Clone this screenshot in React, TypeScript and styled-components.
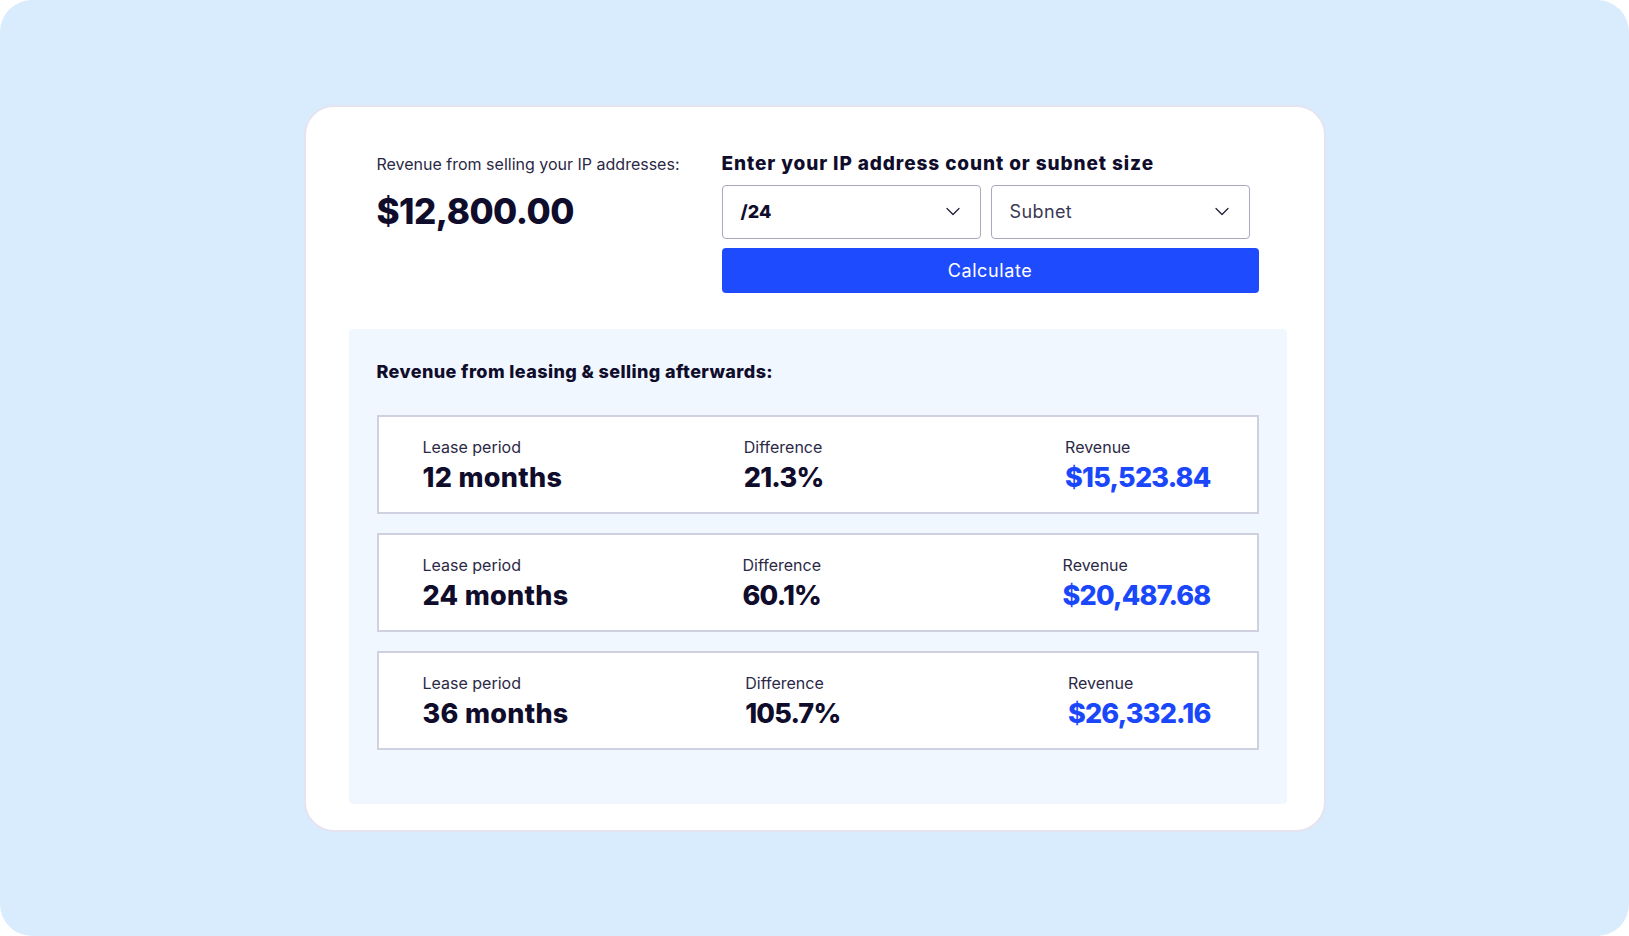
import * as React from 'react';
import styled, { createGlobalStyle } from 'styled-components';

const GlobalStyle = createGlobalStyle`
  html, body {
    margin: 0;
    padding: 0;
    background: #ffffff;
  }
  * {
    box-sizing: border-box;
  }
`;

const Frame = styled.div`
  width: 1629px;
  height: 936px;
  background: #d8ecfe;
  border-radius: 32px;
  display: flex;
  align-items: center;
  justify-content: center;
  font-family: Inter, 'Noto Sans', sans-serif;
  color: #100d2c;
`;

const Card = styled.div`
  width: 1022px;
  background: #ffffff;
  border: 2px solid #e5e3f0;
  border-radius: 30px;
  padding: 45px 37px 26px 43px;
`;

const Top = styled.div`
  display: grid;
  grid-template-columns: 345px 1fr;
  padding: 0 28px;
`;

const Summary = styled.div`
  display: flex;
  flex-direction: column;
  gap: 14px;
`;

const SummaryLabel = styled.div`
  font-size: 16px;
  line-height: 24px;
  color: #2b2946;
`;

const SummaryAmount = styled.div`
  font-size: 35px;
  line-height: 42px;
  font-weight: 800;
  letter-spacing: -0.5px;
`;

const Form = styled.div`
  display: flex;
  flex-direction: column;
`;

const FormTitle = styled.div`
  font-size: 19px;
  line-height: 24px;
  font-weight: 800;
  letter-spacing: 0.9px;
  margin-bottom: 9px;
`;

const Selects = styled.div`
  display: flex;
  gap: 10px;
  margin-bottom: 9px;
`;

const SelectBox = styled.div<{ $strong?: boolean }>`
  width: 259px;
  height: 54px;
  border: 1.5px solid #a9a8c0;
  border-radius: 4px;
  display: flex;
  align-items: center;
  justify-content: space-between;
  padding: 0 20px 0 18px;
  font-size: 18px;
  letter-spacing: ${(p) => (p.$strong ? '0' : '0.4px')};
  font-weight: ${(p) => (p.$strong ? 800 : 400)};
  color: ${(p) => (p.$strong ? '#100d2c' : '#3a3852')};
`;

const CalcButton = styled.button`
  height: 45px;
  width: 100%;
  border: none;
  border-radius: 4px;
  background: #1f4bff;
  color: #ffffff;
  font-family: inherit;
  font-size: 18px;
  letter-spacing: 0.6px;
  cursor: pointer;
`;

const Panel = styled.div`
  margin-top: 36px;
  background: #f0f7fe;
  border-radius: 4px;
  padding: 30px 28px 54px;
`;

const PanelTitle = styled.div`
  font-size: 18px;
  line-height: 26px;
  font-weight: 800;
  letter-spacing: 0.4px;
  margin-bottom: 30px;
`;

const Rows = styled.div`
  display: flex;
  flex-direction: column;
  gap: 19px;
`;

const Row = styled.div`
  display: grid;
  grid-template-columns: 1fr 1fr auto;
  background: #ffffff;
  border: 2px solid #d0d1e0;
  padding: 18px 46px 18px 44px;
`;

const Cell = styled.div`
  display: flex;
  flex-direction: column;
  gap: 3px;
`;

const CellLabel = styled.div`
  font-size: 16px;
  line-height: 24px;
  color: #2b2946;
`;

const CellValue = styled.div<{ $accent?: boolean; $numeric?: boolean }>`
  font-size: 27px;
  line-height: 32px;
  font-weight: 800;
  letter-spacing: ${(p) => (p.$numeric ? '-0.8px' : '0.3px')};
  color: ${(p) => (p.$accent ? '#1b47fb' : '#100d2c')};
`;

const Chevron = () => (
  <svg width="14" height="9" viewBox="0 0 14 9" fill="none">
    <path d="M1 1.5l6 6 6-6" stroke="#1c1a33" strokeWidth="1.2" strokeLinecap="round" strokeLinejoin="round" />
  </svg>
);

const leases = [
  { period: '12 months', diff: '21.3%', revenue: '$15,523.84' },
  { period: '24 months', diff: '60.1%', revenue: '$20,487.68' },
  { period: '36 months', diff: '105.7%', revenue: '$26,332.16' },
];

const App = () => (
  <>
    <GlobalStyle />
    <Frame>
      <Card>
        <Top>
          <Summary>
            <SummaryLabel>Revenue from selling your IP addresses:</SummaryLabel>
            <SummaryAmount>$12,800.00</SummaryAmount>
          </Summary>
          <Form>
            <FormTitle>Enter your IP address count or subnet size</FormTitle>
            <Selects>
              <SelectBox $strong>
                /24
                <Chevron />
              </SelectBox>
              <SelectBox>
                Subnet
                <Chevron />
              </SelectBox>
            </Selects>
            <CalcButton>Calculate</CalcButton>
          </Form>
        </Top>
        <Panel>
          <PanelTitle>Revenue from leasing &amp; selling afterwards:</PanelTitle>
          <Rows>
            {leases.map((l) => (
              <Row key={l.period}>
                <Cell>
                  <CellLabel>Lease period</CellLabel>
                  <CellValue>{l.period}</CellValue>
                </Cell>
                <Cell>
                  <CellLabel>Difference</CellLabel>
                  <CellValue $numeric>{l.diff}</CellValue>
                </Cell>
                <Cell>
                  <CellLabel>Revenue</CellLabel>
                  <CellValue $numeric $accent>
                    {l.revenue}
                  </CellValue>
                </Cell>
              </Row>
            ))}
          </Rows>
        </Panel>
      </Card>
    </Frame>
  </>
);

export default App;
